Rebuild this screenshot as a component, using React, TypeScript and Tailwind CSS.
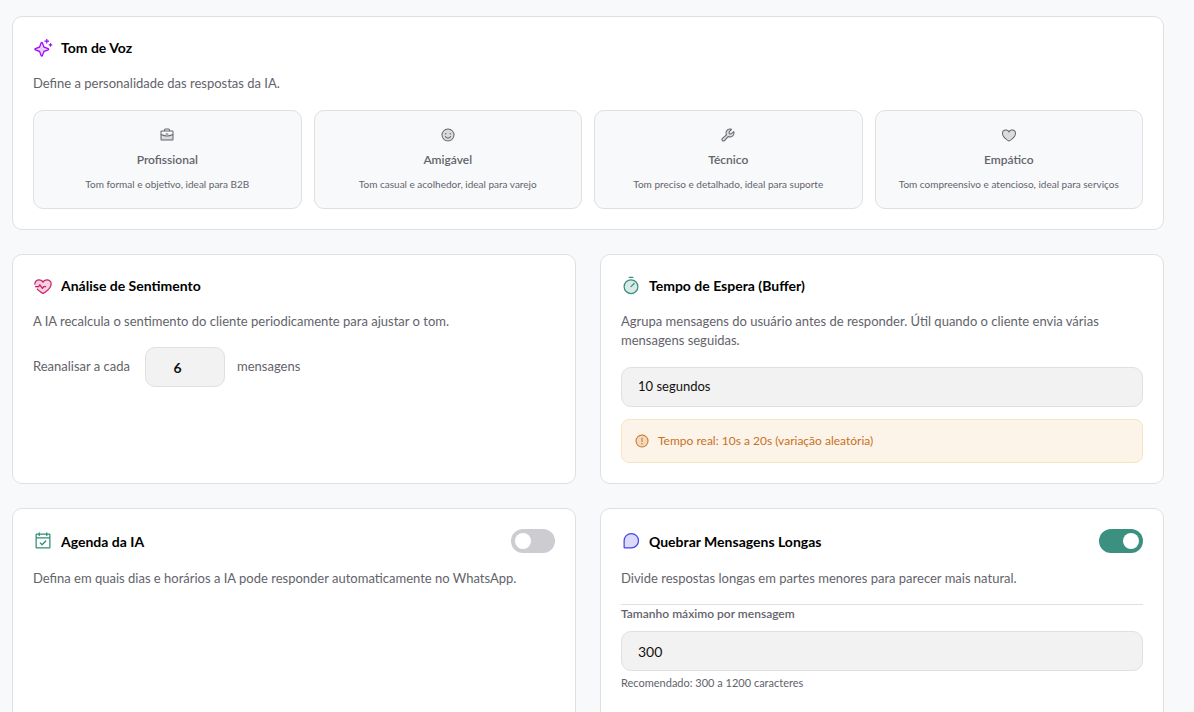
import { useState, type ReactNode } from 'react'
import { clsx } from 'clsx'
import type { IconType } from 'react-icons'
import {
  PiBriefcaseDuotone,
  PiCalendarCheck,
  PiChatTeardropDuotone,
  PiHeartDuotone,
  PiHeartbeatDuotone,
  PiSmileyDuotone,
  PiSparkleDuotone,
  PiTimerDuotone,
  PiWarningCircleDuotone,
  PiWrenchDuotone,
} from 'react-icons/pi'

interface Tone {
  id: string
  label: string
  description: string
  icon: IconType
}

const tones: Tone[] = [
  {
    id: 'profissional',
    label: 'Profissional',
    description: 'Tom formal e objetivo, ideal para B2B',
    icon: PiBriefcaseDuotone,
  },
  {
    id: 'amigavel',
    label: 'Amigável',
    description: 'Tom casual e acolhedor, ideal para varejo',
    icon: PiSmileyDuotone,
  },
  {
    id: 'tecnico',
    label: 'Técnico',
    description: 'Tom preciso e detalhado, ideal para suporte',
    icon: PiWrenchDuotone,
  },
  {
    id: 'empatico',
    label: 'Empático',
    description: 'Tom compreensivo e atencioso, ideal para serviços',
    icon: PiHeartDuotone,
  },
]

const bufferOptions = [5, 10, 15, 20, 30]

const fieldClass =
  'h-10 rounded-[10px] border border-[#dfe0e2] bg-[#f2f2f2] text-[#111] outline-none focus-visible:border-[#3c9080]'

export default function App() {
  const [tone, setTone] = useState<string | null>(null)
  const [interval, setInterval] = useState(6)
  const [buffer, setBuffer] = useState(10)
  const [scheduleOn, setScheduleOn] = useState(false)
  const [splitOn, setSplitOn] = useState(true)
  const [maxLength, setMaxLength] = useState(300)

  return (
    <main className="h-screen overflow-y-auto bg-[#f8f9fb] pt-4 pr-[30px] pb-6 pl-3 font-['Lato',sans-serif] text-[13px] text-[#63636b] [scrollbar-width:none]">
      <div className="grid grid-cols-2 gap-6">
        <Card
          className="col-span-2"
          title="Tom de Voz"
          icon={<PiSparkleDuotone className="size-5 text-[#9810fa]" />}
          description="Define a personalidade das respostas da IA."
        >
          <div className="mt-[17px] grid grid-cols-4 gap-3">
            {tones.map((t) => (
              <ToneButton
                key={t.id}
                tone={t}
                selected={tone === t.id}
                onSelect={() => setTone(t.id)}
              />
            ))}
          </div>
        </Card>

        <Card
          title="Análise de Sentimento"
          icon={<PiHeartbeatDuotone className="size-5 text-[#cc1f6a]" />}
          description="A IA recalcula o sentimento do cliente periodicamente para ajustar o tom."
        >
          <div className="mt-4 flex items-center gap-3">
            <label htmlFor="interval" className="min-w-25">
              Reanalisar a cada
            </label>
            <input
              id="interval"
              type="number"
              min={1}
              value={interval}
              onChange={(e) => setInterval(Number(e.target.value))}
              className={clsx(fieldClass, 'w-20 px-4 text-center text-sm font-bold')}
            />
            <span>mensagens</span>
          </div>
        </Card>

        <Card
          title="Tempo de Espera (Buffer)"
          icon={<PiTimerDuotone className="size-5 text-[#3c9080]" />}
          description="Agrupa mensagens do usuário antes de responder. Útil quando o cliente envia várias mensagens seguidas."
        >
          <select
            aria-label="Tempo de Espera (Buffer)"
            value={buffer}
            onChange={(e) => setBuffer(Number(e.target.value))}
            className={clsx(fieldClass, 'mt-[17px] w-full appearance-none px-4')}
          >
            {bufferOptions.map((s) => (
              <option key={s} value={s}>
                {s} segundos
              </option>
            ))}
          </select>
          <div className="mt-3 flex h-11 items-center gap-2 rounded-lg border border-[#fae3c0] bg-[#fdf4e9] px-3 text-xs text-[#c8701f]">
            <PiWarningCircleDuotone className="size-4" />
            Tempo real: {buffer}s a {buffer * 2}s (variação aleatória)
          </div>
        </Card>

        <Card
          title="Agenda da IA"
          icon={<PiCalendarCheck className="size-5 text-[#2f8f76]" />}
          description="Defina em quais dias e horários a IA pode responder automaticamente no WhatsApp."
          action={<Toggle label="Agenda da IA" checked={scheduleOn} onChange={setScheduleOn} />}
        />

        <Card
          title="Quebrar Mensagens Longas"
          icon={<PiChatTeardropDuotone className="size-5 text-[#4a45e6]" />}
          description="Divide respostas longas em partes menores para parecer mais natural."
          action={<Toggle label="Quebrar Mensagens Longas" checked={splitOn} onChange={setSplitOn} />}
        >
          {splitOn && (
            <div className="mt-4 flex flex-col border-t border-[#dfe0e2] pb-4">
              <label htmlFor="max-length" className="text-xs leading-[18px] font-semibold">
                Tamanho máximo por mensagem
              </label>
              <input
                id="max-length"
                type="number"
                value={maxLength}
                onChange={(e) => setMaxLength(Number(e.target.value))}
                className={clsx(fieldClass, 'mt-2 w-full px-4 text-sm')}
              />
              <p className="mt-1 text-[11px] leading-4">Recomendado: 300 a 1200 caracteres</p>
            </div>
          )}
        </Card>
      </div>
    </main>
  )
}

function Card({
  title,
  icon,
  description,
  action,
  className,
  children,
}: {
  title: string
  icon: ReactNode
  description: string
  action?: ReactNode
  className?: string
  children?: ReactNode
}) {
  return (
    <section className={clsx('rounded-[10px] border border-[#dfe0e2] bg-white p-5', className)}>
      <div className="mb-4 flex items-center justify-between">
        <div className="flex items-center gap-2">
          {icon}
          <h2 className="text-sm leading-[21px] font-bold text-black">{title}</h2>
        </div>
        {action}
      </div>
      <p className="leading-[19px]">{description}</p>
      {children}
    </section>
  )
}

function ToneButton({
  tone,
  selected,
  onSelect,
}: {
  tone: Tone
  selected: boolean
  onSelect: () => void
}) {
  const Icon = tone.icon
  return (
    <button
      type="button"
      aria-pressed={selected}
      onClick={onSelect}
      className={clsx(
        'flex flex-col items-center gap-2 rounded-[10px] border bg-[#f8f9fb] px-3 py-4',
        selected ? 'border-[#3c9080]' : 'border-[#dfe0e2]'
      )}
    >
      <Icon className="size-4" />
      <span className="text-xs leading-[18px] font-semibold">{tone.label}</span>
      <span className="text-[10px] leading-[15px]">{tone.description}</span>
    </button>
  )
}

function Toggle({
  label,
  checked,
  onChange,
}: {
  label: string
  checked: boolean
  onChange: (checked: boolean) => void
}) {
  return (
    <button
      type="button"
      role="switch"
      aria-label={label}
      aria-checked={checked}
      onClick={() => onChange(!checked)}
      className={clsx(
        'flex h-6 w-11 items-center rounded-full px-1 transition-colors',
        checked ? 'justify-end bg-[#3c9080]' : 'justify-start bg-[#cdccd1]'
      )}
    >
      <span className="size-4 rounded-full bg-white" />
    </button>
  )
}
